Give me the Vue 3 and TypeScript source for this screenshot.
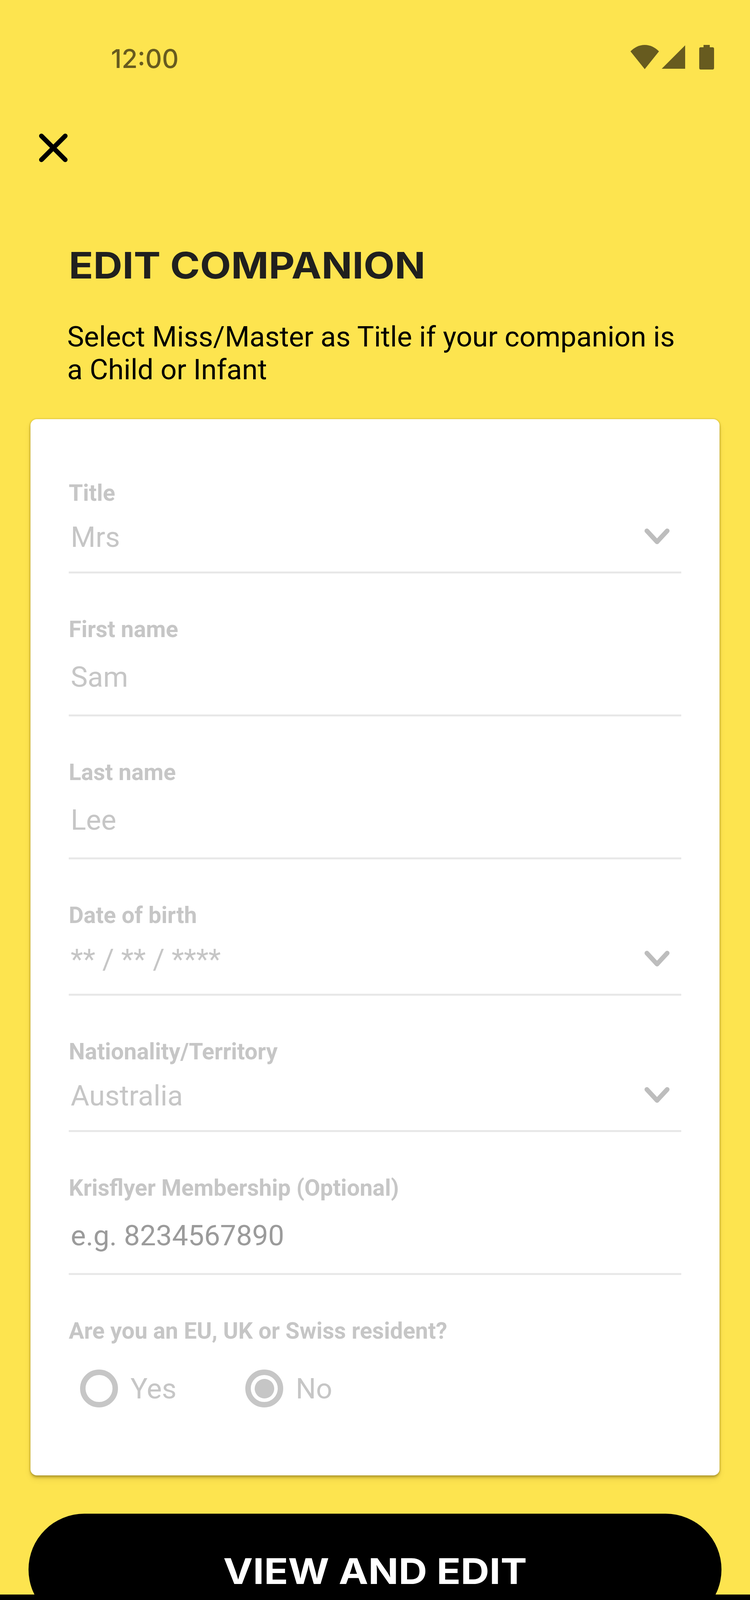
<script setup lang="ts">
interface Field {
  label: string
  value: string
  kind: 'select' | 'input'
  placeholder?: boolean
}
const fields: Field[] = [
  { label: 'Title', value: 'Mrs', kind: 'select' },
  { label: 'First name', value: 'Sam', kind: 'input' },
  { label: 'Last name', value: 'Lee', kind: 'input' },
  { label: 'Date of birth', value: '** / ** / ****', kind: 'select' },
  { label: 'Nationality/Territory', value: 'Australia', kind: 'select' },
  { label: 'Krisflyer Membership (Optional)', value: 'e.g. 8234567890', kind: 'input', placeholder: true }
]
</script>

<template>
  <div class="screen">
    <div class="status">
      <span class="time">12:00</span>
      <div class="status-icons">
        <svg class="wifi" width="73" height="62" viewBox="0 0 73 62"><path d="M0 16.5C9.5 6.5 22.5 0 36.5 0S63.500 6.500 73 16.500L36.500 62Z" /></svg>
        <svg class="signal" width="60" height="60" viewBox="0 0 60 60"><path d="M60 0V60H0Z" /></svg>
        <svg class="battery" width="38" height="63" viewBox="0 0 38 63"><path d="M11 0H27V6H34Q38 6 38 10V59Q38 63 34 63H4Q0 63 0 59V10Q0 6 4 6H11Z" /></svg>
      </div>
    </div>
    <div class="close-row">
      <svg width="73" height="73" viewBox="0 0 73 73"><path d="M6 6L67 67M67 6L6 67" /></svg>
    </div>
    <h1 class="heading">EDIT COMPANION</h1>
    <p class="intro">Select Miss/Master as Title if your companion is<br />a Child or Infant</p>

    <form class="card">
      <div v-for="f in fields" :key="f.label" class="field" :class="f.kind">
        <div class="label">{{ f.label }}</div>
        <div class="row">
          <span class="value" :class="{ placeholder: f.placeholder }">{{ f.value }}</span>
          <svg v-if="f.kind === 'select'" class="chevron" width="64" height="40" viewBox="0 0 64 40"><path d="M6 6L32 34L58 6" /></svg>
        </div>
      </div>
      <div class="residency">
        <div class="label">Are you an EU, UK or Swiss resident?</div>
        <div class="radios">
          <div class="radio-item yes">
            <span class="radio"></span>
            <span class="radio-text">Yes</span>
          </div>
          <div class="radio-item">
            <span class="radio on"></span>
            <span class="radio-text">No</span>
          </div>
        </div>
      </div>
    </form>

    <button class="cta" type="button"><span class="cta-text">VIEW AND EDIT</span></button>

    <div class="nav-bar"><span class="home"></span></div>
  </div>
</template>

<style>
html, body { margin: 0; background: #fde44f; }
</style>

<style scoped>
.screen {
  position: relative;
  width: 1920px;
  height: 4160px;
  overflow: hidden;
  background: #fde44f;
  font-family: Roboto, "Liberation Sans", sans-serif;
}
.status {
  height: 300px;
  padding: 0 92px 0 284px;
  box-sizing: border-box;
  display: flex;
  align-items: center;
  justify-content: space-between;
}
.time {
  font-family: Inter, Roboto, sans-serif;
  font-weight: 500;
  font-size: 66px;
  color: #675b1f;
}
.status-icons { display: flex; align-items: flex-start; margin-bottom: 8px; }
.status-icons svg { fill: #675b1f; display: block; }
.wifi { margin-right: 7px; }
.signal { margin-right: 36px; margin-top: 1px; }
.close-row { height: 156px; padding-left: 100px; display: flex; align-items: center; }
.close-row svg path { stroke: #000; stroke-width: 12; stroke-linecap: round; fill: none; }
.heading {
  margin: 163px 0 0 176px;
  font-family: Inter, "Open Sans", sans-serif;
  font-weight: 700;
  font-size: 93px;
  line-height: 120px;
  color: #20201e;
  transform: scaleX(1.11);
  transform-origin: left center;
}
.intro {
  margin: 82px 0 84px 172px;
  font-size: 72.6px;
  line-height: 84px;
  color: #000;
}
.card {
  margin: 0 78px;
  height: 2704px;
  padding: 46px 98px 0;
  box-sizing: border-box;
  background: #fff;
  border-radius: 16px;
  box-shadow: 0 5px 6px rgba(90, 70, 0, 0.35), 0 10px 16px rgba(90, 70, 0, 0.1), 0 0 5px rgba(90, 70, 0, 0.3);
}
.field {
  display: flex;
  flex-direction: column;
  box-sizing: border-box;
  border-bottom: 5px solid #e8e8e8;
  padding-top: 110px;
}
.field.select { height: 349px; }
.field.input { height: 366px; }
.label {
  font-weight: 700;
  font-size: 58.6px;
  line-height: 66px;
  color: #c6c6c6;
}
.row {
  flex: 1;
  display: flex;
  align-items: center;
  justify-content: space-between;
  padding: 0 30px 8px 5px;
}
.value { font-size: 73px; color: #c6c6c6; }
.value.placeholder { color: #9b9b9b; }
.chevron { margin-bottom: 4px; }
.chevron path { fill: none; stroke: #bdbdbd; stroke-width: 12; stroke-linecap: round; stroke-linejoin: round; }
.residency { padding-top: 110px; }
.radios { display: flex; margin-top: 66px; padding-left: 29px; }
.radio-item { display: flex; align-items: center; }
.radio-item.yes { width: 423px; }
.radio {
  width: 97px;
  height: 97px;
  border-radius: 50%;
  border: 14px solid #c6c6c6;
  box-sizing: border-box;
  display: flex;
  align-items: center;
  justify-content: center;
}
.radio.on::after {
  content: "";
  width: 50px;
  height: 50px;
  border-radius: 50%;
  background: #c6c6c6;
}
.radio-text { margin-left: 32px; font-size: 73px; color: #c6c6c6; }
.cta {
  display: block;
  box-sizing: border-box;
  width: 1774px;
  height: 286px;
  margin: 98px 0 0 73px;
  border: 0;
  border-radius: 143px;
  background: #000;
  color: #fff;
  font-family: Inter, "Open Sans", sans-serif;
  font-weight: 700;
  font-size: 91px;
  padding: 8px 0 0;
}
.cta-text { display: inline-block; transform: scaleX(1.116); }
.nav-bar {
  position: absolute;
  left: 0;
  right: 0;
  bottom: 0;
  height: 78px;
  background: #000;
}
.home {
  position: absolute;
  left: 784px;
  top: 36px;
  width: 352px;
  height: 12px;
  border-radius: 6px;
  background: #e8e8e8;
}
</style>
